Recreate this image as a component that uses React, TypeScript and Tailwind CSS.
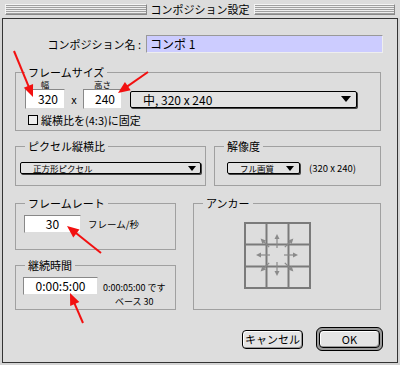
import React from 'react';

type Pt = { x1: number; y1: number; x2: number; y2: number };

// arrow with a filled head, drawn from (x1,y1) to the tip at (x2,y2)
function Arrow({ x1, y1, x2, y2, head = 12, half = 5, color, width = 2 }: Pt & { head?: number; half?: number; color: string; width?: number }) {
  const dx = x2 - x1;
  const dy = y2 - y1;
  const len = Math.sqrt(dx * dx + dy * dy);
  const ux = dx / len;
  const uy = dy / len;
  const bx = x2 - ux * head;
  const by = y2 - uy * head;
  const px = -uy;
  const py = ux;
  const pts = `${x2},${y2} ${bx + px * half},${by + py * half} ${bx - px * half},${by - py * half}`;
  return (
    <g>
      <line x1={x1} y1={y1} x2={bx + ux} y2={by + uy} stroke={color} strokeWidth={width} />
      <polygon points={pts} fill={color} />
    </g>
  );
}

function Triangle({ w = 10, h = 6 }: { w?: number; h?: number }) {
  return (
    <svg width={w} height={h} viewBox={`0 0 ${w} ${h}`}>
      <polygon points={`0,0 ${w},0 ${w / 2},${h}`} fill="#000" />
    </svg>
  );
}

function Stripes() {
  return (
    <div className="flex-1 h-[11px] border border-[#f4f4f4] border-r-[#888] border-b-[#888] bg-[repeating-linear-gradient(to_bottom,#a0a0a0_0px,#a0a0a0_1px,#eeeeee_1px,#eeeeee_2px)]" />
  );
}

function Group({ title, className, children }: { title: string; className: string; children: React.ReactNode }) {
  return (
    <fieldset className={`border border-[#a0a0a0] ${className}`}>
      <legend className="ml-[9px] px-[3px] text-[11px] leading-[12px]">{title}</legend>
      {children}
    </fieldset>
  );
}

function AnchorGrid() {
  const c = 33;
  const dirs = [
    [-1, -1], [0, -1], [1, -1],
    [-1, 0], [1, 0],
    [-1, 1], [0, 1], [1, 1],
  ];
  return (
    <svg width="67" height="67" viewBox="0 0 67 67">
      <rect x="1" y="1" width="65" height="65" fill="none" stroke="#7a7a7a" strokeWidth="2" />
      <line x1="22.5" y1="1" x2="22.5" y2="66" stroke="#7a7a7a" strokeWidth="2" />
      <line x1="44.5" y1="1" x2="44.5" y2="66" stroke="#7a7a7a" strokeWidth="2" />
      <line x1="1" y1="22.5" x2="66" y2="22.5" stroke="#7a7a7a" strokeWidth="2" />
      <line x1="1" y1="44.5" x2="66" y2="44.5" stroke="#7a7a7a" strokeWidth="2" />
      {dirs.map(([dx, dy], i) => {
        const diag = dx !== 0 && dy !== 0;
        const r1 = diag ? 10 : 7;
        const r2 = 21;
        const k = diag ? 0.78 : 1;
        return (
          <Arrow
            key={i}
            x1={c + dx * r1 * k}
            y1={c + dy * r1 * k}
            x2={c + dx * r2 * k}
            y2={c + dy * r2 * k}
            head={5}
            half={2.5}
            width={1.2}
            color="#8a8a8a"
          />
        );
      })}
    </svg>
  );
}

const field = 'bg-white border border-[#888] border-r-[#ddd] border-b-[#ddd] text-[12px]';
const popup = 'flex items-center justify-between border border-black rounded-[2px] shadow-[1px_1px_0_#444] bg-[#e2e2e2]';

export default function App() {
  const red = '#f21010';
  return (
    <div className="relative w-[400px] h-[365px] bg-[#d4d4d4] font-['Noto_Sans_CJK_JP','Noto_Sans',sans-serif] text-black select-none">
      {/* title bar */}
      <div className="h-[18px] flex items-center px-[5px] bg-[#dcdcdc]">
        <Stripes />
        <span className="px-[4px] text-[11px] leading-[14px]">コンポジション設定</span>
        <Stripes />
      </div>

      {/* dialog body */}
      <div className="mx-[2px] h-[345px] border border-[#333] bg-[#dddddd] pl-[12px] pr-[14px]">
        <div className="mt-[16px] flex items-center justify-end gap-[5px]">
          <span className="text-[11px] leading-[14px]">コンポジション名 :</span>
          <div className="w-[237px] h-[18px] bg-[#ccccff] border border-[#999] border-r-[#eee] border-b-[#eee] pl-[3px] text-[12px] leading-[16px]">
            コンポ 1
          </div>
        </div>

        {/* frame size */}
        <Group title="フレームサイズ" className="mt-[13px] w-[366px] h-[65px]">
          <div className="pl-[9px]">
            <div className="mt-[2px] flex text-[8.5px] leading-[9px]">
              <span className="w-[40px] text-center">幅</span>
              <span className="w-[18px]" />
              <span className="w-[39px] text-center">高さ</span>
            </div>
            <div className="flex items-center">
              <div className={`w-[40px] h-[20px] ${field} leading-[18px] text-right pr-[6px]`}>320</div>
              <span className="w-[18px] text-center text-[11px]">x</span>
              <div className={`w-[39px] h-[20px] ${field} leading-[18px] text-right pr-[6px]`}>240</div>
              <div className={`ml-[8px] w-[227px] h-[17px] ${popup} pl-[12px] pr-[5px] text-[12px] leading-[15px]`}>
                <span>中, 320 x 240</span>
                <Triangle w={10} h={6} />
              </div>
            </div>
            <div className="mt-[5px] ml-[3px] flex items-center gap-[3px]">
              <div className="w-[10px] h-[10px] border border-black bg-[#eee]" />
              <span className="text-[11px] leading-[12px]">縦横比を(4:3)に固定</span>
            </div>
          </div>
        </Group>

        {/* pixel aspect + resolution */}
        <div className="mt-[9px] flex gap-[8px]">
          <Group title="ピクセル縦横比" className="w-[191px] h-[46px]">
            <div className="pl-[4px]">
              <div className={`mt-[10px] w-[181px] h-[12px] ${popup} pl-[12px] pr-[4px] text-[8.5px] leading-[10px]`}>
                <span>正方形ピクセル</span>
                <Triangle w={8} h={5} />
              </div>
            </div>
          </Group>
          <Group title="解像度" className="w-[167px] h-[46px]">
            <div className="pl-[12px] mt-[10px] flex items-center">
              <div className={`w-[73px] h-[12px] ${popup} pl-[12px] pr-[5px] text-[8.5px] leading-[10px]`}>
                <span>フル画質</span>
                <Triangle w={8} h={5} />
              </div>
              <span className="ml-[9px] text-[9.5px] leading-[10px]">(320 x 240)</span>
            </div>
          </Group>
        </div>

        {/* frame rate, duration, anchor */}
        <div className="mt-[11px] flex gap-[17px]">
          <div className="flex flex-col gap-[9px]">
            <Group title="フレームレート" className="w-[161px] h-[53px]">
              <div className="pl-[8px] mt-[6px] flex items-center">
                <div className={`w-[57px] h-[18px] ${field} leading-[16px] text-center`}>30</div>
                <span className="ml-[7px] text-[9.5px] leading-[10px]">フレーム/秒</span>
              </div>
            </Group>
            <Group title="継続時間" className="w-[161px] h-[51px]">
              <div className="pl-[7px] mt-[6px] flex items-start">
                <div className={`w-[75px] h-[18px] ${field} leading-[16px] text-center`}>0:00:5:00</div>
                <div className="ml-[5px] pt-[4px] flex flex-col items-center text-[9px] leading-[14px]">
                  <span>0:00:05:00 です</span>
                  <span>ベース 30</span>
                </div>
              </div>
            </Group>
          </div>
          <Group title="アンカー" className="w-[188px] h-[113px]">
            <div className="pl-[50px] mt-[13px]">
              <AnchorGrid />
            </div>
          </Group>
        </div>

        {/* buttons */}
        <div className="mt-[17px] flex items-center justify-end gap-[13px]">
          <div className="w-[61px] h-[19px] flex items-center justify-center border border-black rounded-[4px] bg-[#e4e4e4] shadow-[inset_1px_1px_0_#fff,inset_-1px_-1px_0_#999] text-[11px] leading-[14px]">
            キャンセル
          </div>
          <div className="w-[67px] h-[24px] border border-black rounded-[6px] bg-[#9a9a9a] p-[2px]">
            <div className="w-full h-full flex items-center justify-center border border-black rounded-[4px] bg-[#e4e4e4] shadow-[inset_1px_1px_0_#fff,inset_-1px_-1px_0_#999] text-[11px] leading-[14px]">
              OK
            </div>
          </div>
        </div>
      </div>

      {/* red annotation arrows */}
      <svg className="absolute inset-0 pointer-events-none" width="400" height="365" viewBox="0 0 400 365">
        <Arrow x1={14} y1={51} x2={33} y2={97} color={red} />
        <Arrow x1={148} y1={72} x2={118} y2={93} color={red} />
        <Arrow x1={101} y1={253} x2={67} y2={226} color={red} />
        <Arrow x1={83} y1={323} x2={70} y2={293} color={red} />
      </svg>
    </div>
  );
}
